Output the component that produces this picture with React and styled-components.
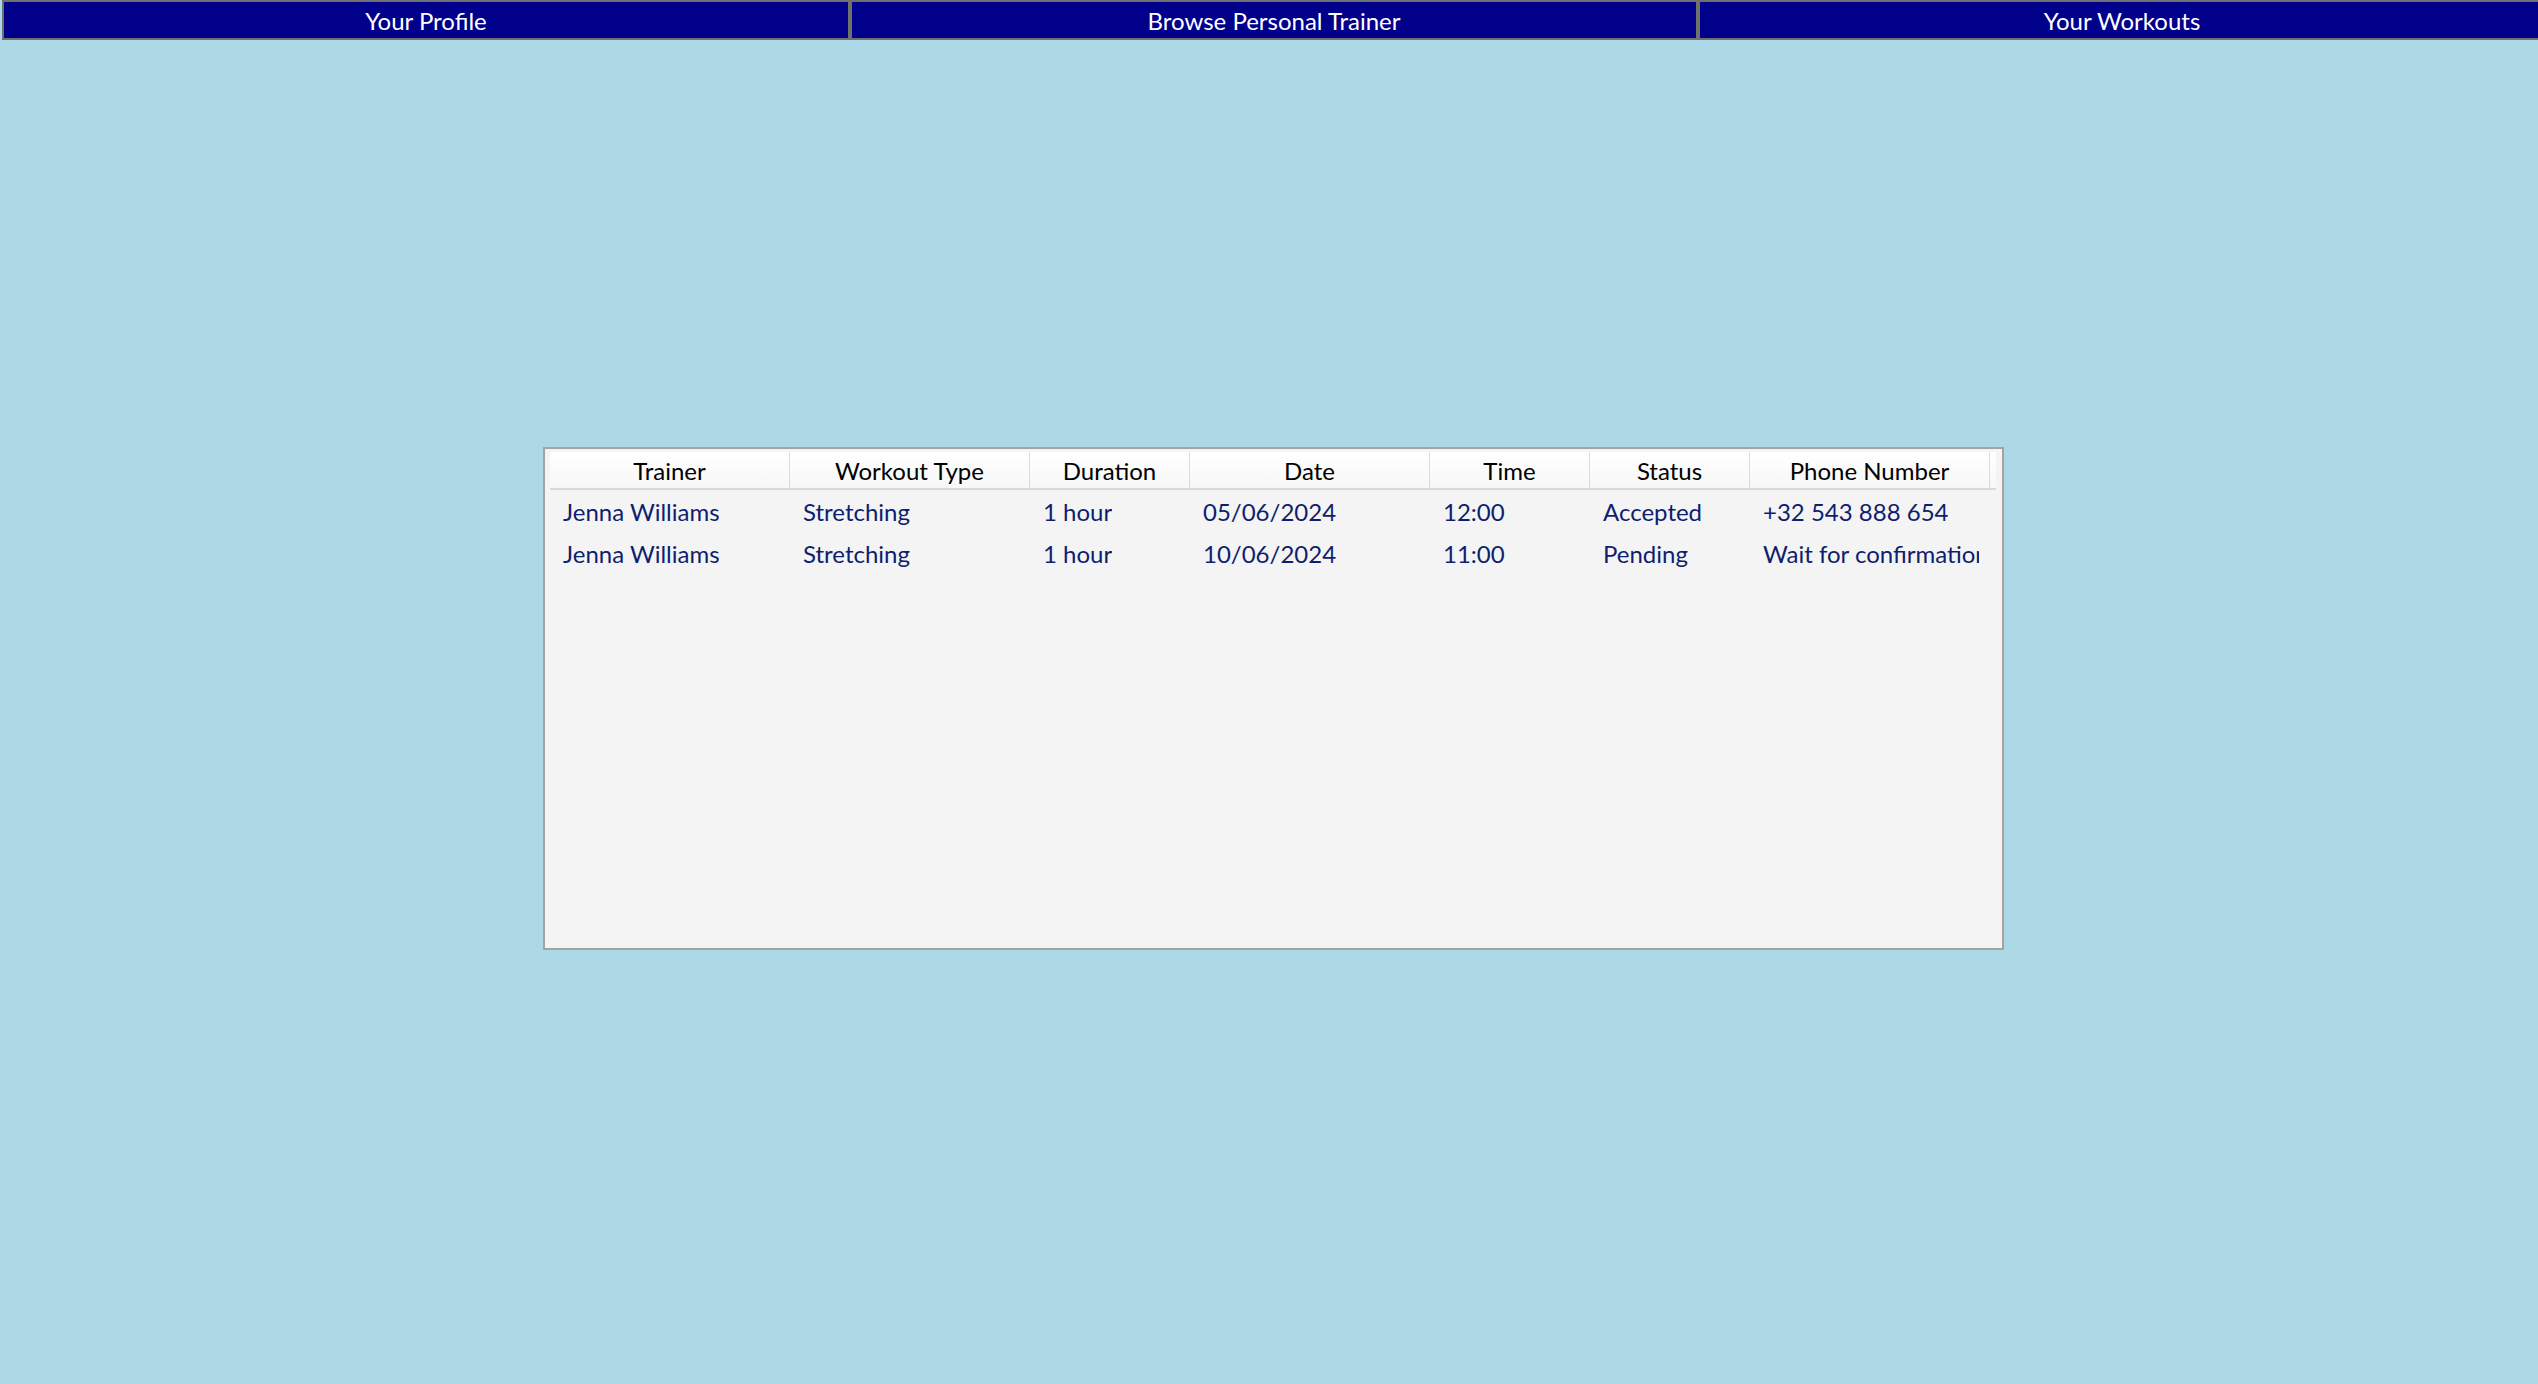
import React from "react";
import styled, { createGlobalStyle } from "styled-components";

const tabs = ["Your Profile", "Browse Personal Trainer", "Your Workouts"];

const columns = [
  { title: "Trainer", width: 240 },
  { title: "Workout Type", width: 240 },
  { title: "Duration", width: 160 },
  { title: "Date", width: 240 },
  { title: "Time", width: 160 },
  { title: "Status", width: 160 },
  { title: "Phone Number", width: 240 },
];

const workouts = [
  ["Jenna Williams", "Stretching", "1 hour", "05/06/2024", "12:00", "Accepted", "+32 543 888 654"],
  ["Jenna Williams", "Stretching", "1 hour", "10/06/2024", "11:00", "Pending", "Wait for confirmation"],
];

const template = columns.map((c) => c.width + "px").join(" ") + " 1fr";

const App = () => {
  return (
    <Page>
      <GlobalStyle />
      <Nav>
        {tabs.map((tab) => (
          <NavButton key={tab}>{tab}</NavButton>
        ))}
      </Nav>
      <Stage>
        <Panel>
          <HeaderRow>
            {columns.map((col) => (
              <HeaderCell key={col.title}>{col.title}</HeaderCell>
            ))}
            <HeaderFiller />
          </HeaderRow>
          {workouts.map((row, i) => (
            <Row key={i}>
              {row.map((value, j) => (
                <Cell key={j}>
                  <CellText>{value}</CellText>
                </Cell>
              ))}
            </Row>
          ))}
        </Panel>
      </Stage>
    </Page>
  );
};

const GlobalStyle = createGlobalStyle`
  html, body {
    margin: 0;
    padding: 0;
    background: #add8e6;
    overflow: hidden;
  }
  body {
    font-family: Lato, "Open Sans", sans-serif;
  }
`;

const Page = styled.div`
  min-height: 100vh;
  background: #add8e6;
`;

const Nav = styled.div`
  display: flex;
  padding-left: 2px;
  height: 40px;
`;

const NavButton = styled.button`
  flex: none;
  width: 848px;
  height: 40px;
  box-sizing: border-box;
  border: 2px solid #707070;
  background: #00008b;
  color: #ffffff;
  font-family: Lato, "Open Sans", sans-serif;
  font-size: 24px;
  padding: 0;
  cursor: pointer;
`;

const Stage = styled.div`
  display: flex;
  justify-content: center;
  padding: 407px 0 0 9px;
`;

const Panel = styled.div`
  width: 1461px;
  height: 503px;
  box-sizing: border-box;
  border: 2px solid #a3a3a3;
  background: #f4f4f4;
  padding: 3px 6px 0 5px;
`;

const HeaderRow = styled.div`
  display: grid;
  grid-template-columns: ${template};
  height: 38px;
  box-sizing: border-box;
  border-bottom: 2px solid #d9d9d9;
  background: linear-gradient(#ffffff, #f7f7f7);
`;

const HeaderCell = styled.div`
  display: flex;
  align-items: center;
  justify-content: center;
  border-right: 1px solid #dadada;
  font-size: 24px;
  color: #000000;
`;

const HeaderFiller = styled.div``;

const Row = styled.div`
  display: grid;
  grid-template-columns: ${template};
  height: 42px;
`;

const Cell = styled.div`
  display: flex;
  align-items: center;
  padding: 0 11px 0 13px;
  min-width: 0;
`;

const CellText = styled.span`
  overflow: hidden;
  white-space: nowrap;
  font-size: 24px;
  color: #0f1e6e;
`;

export default App;
